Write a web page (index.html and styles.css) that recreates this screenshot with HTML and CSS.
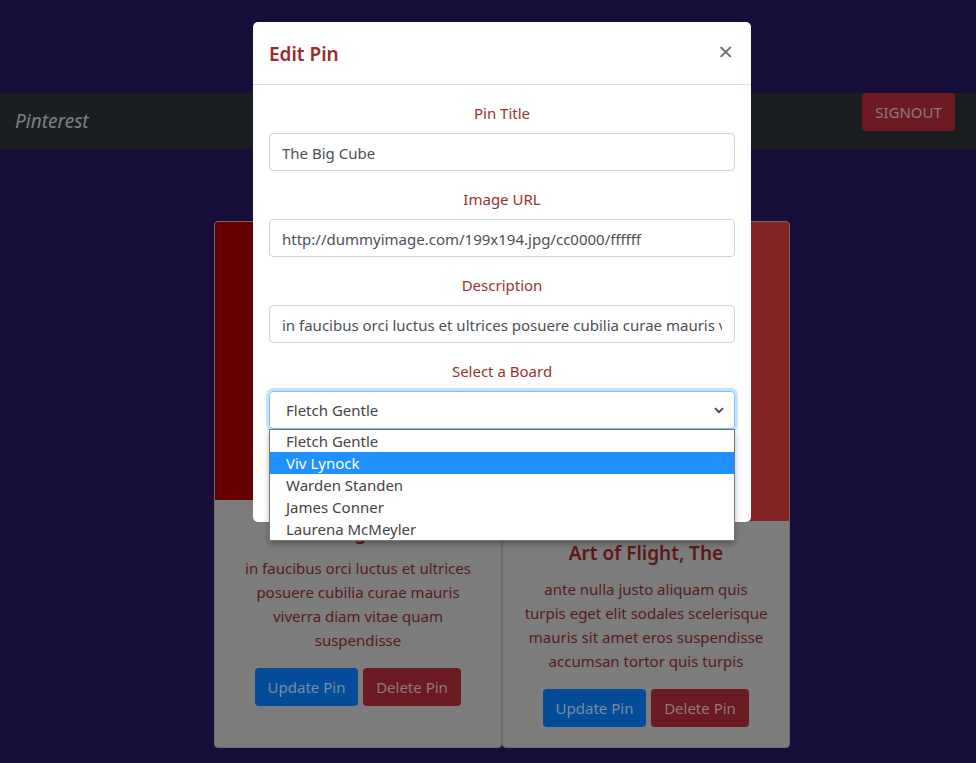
FILE: index.html
```html
<!DOCTYPE html>
<html>
<head>
<meta charset="utf-8">
<link rel="stylesheet" href="styles.css">
</head>
<body>
<div class="page">
  <nav class="navbar">
    <span class="brand">Pinterest</span>
    <button class="btn btn-signout">SIGNOUT</button>
  </nav>
  <div class="cards">
    <div class="card">
      <div class="card-img img-a"></div>
      <div class="card-body">
        <h5 class="card-title">The Big Cube</h5>
        <p class="card-text">in faucibus orci luctus et ultrices posuere cubilia curae mauris viverra diam vitae quam suspendisse</p>
        <div class="actions">
          <button class="btn btn-update">Update Pin</button>
          <button class="btn btn-delete">Delete Pin</button>
        </div>
      </div>
    </div>
    <div class="card">
      <div class="card-img img-b"></div>
      <div class="card-body">
        <h5 class="card-title">Art of Flight, The</h5>
        <p class="card-text">ante nulla justo aliquam quis turpis eget elit sodales scelerisque mauris sit amet eros suspendisse accumsan tortor quis turpis</p>
        <div class="actions">
          <button class="btn btn-update">Update Pin</button>
          <button class="btn btn-delete">Delete Pin</button>
        </div>
      </div>
    </div>
  </div>
</div>

<div class="modal">
  <div class="modal-header">
    <h5 class="modal-title">Edit Pin</h5>
    <span class="close">&times;</span>
  </div>
  <div class="modal-body">
    <div class="form-group">
      <label class="label">Pin Title</label>
      <div class="input"><span class="value">The Big Cube</span></div>
    </div>
    <div class="form-group">
      <label class="label">Image URL</label>
      <div class="input"><span class="value">http://dummyimage.com/199x194.jpg/cc0000/ffffff</span></div>
    </div>
    <div class="form-group">
      <label class="label">Description</label>
      <div class="input"><span class="value">in faucibus orci luctus et ultrices posuere cubilia curae mauris viverra diam vitae quam suspendisse</span></div>
    </div>
    <div class="form-group">
      <label class="label">Select a Board</label>
      <div class="input select">
        <span>Fletch Gentle</span>
        <svg class="chev" width="10" height="7" viewBox="0 0 10 7"><path d="M1 1.2 L5 5.2 L9 1.2" fill="none" stroke="#444" stroke-width="1.8"/></svg>
      </div>
    </div>
    <div class="form-group last">
      <button class="btn btn-submit">Save Changes</button>
    </div>
  </div>
  <ul class="dropdown">
    <li>Fletch Gentle</li>
    <li class="active">Viv Lynock</li>
    <li>Warden Standen</li>
    <li>James Conner</li>
    <li>Laurena McMeyler</li>
  </ul>
</div>
</body>
</html>
```

FILE: styles.css
```css
* { box-sizing: border-box; }
html, body { margin: 0; padding: 0; }
body {
  background: #170d39;
  font-family: "Noto Sans", "Open Sans", sans-serif;
  font-size: 15px;
  line-height: 1.5;
  width: 976px;
  height: 763px;
  overflow: hidden;
}
.page { padding-top: 93px; }
.navbar {
  height: 56px;
  background: #1b1e21;
  display: flex;
  justify-content: space-between;
  align-items: flex-start;
  padding: 0 21px 0 15px;
}
.brand {
  font-style: italic;
  font-size: 19px;
  color: #7f7f80;
  line-height: 56px;
}
.btn {
  font-family: inherit;
  font-size: 15px;
  line-height: 24px;
  border: 1px solid transparent;
  border-radius: 4px;
  padding: 6px 12px;
}
.btn-signout {
  background: #6e1a22;
  color: #8c7b80;
  height: 38px;
  width: 93px;
  padding: 6px 0;
}
.cards {
  display: flex;
  align-items: stretch;
  padding: 72px 0 0 214px;
}
.card {
  width: 288px;
  background: #7c7c7d;
  border: 1px solid #6b6b6b;
  border-radius: 4px;
  display: flex;
  flex-direction: column;
  overflow: hidden;
}
.card-img { width: 100%; flex-shrink: 0; }
.img-a { height: 278px; background: #660000; }
.img-b { height: 299px; background: #822424; }
.card-body {
  padding: 20px 20px;
  text-align: center;
}
.card-title {
  margin: 0 0 12px;
  font-size: 19px;
  font-weight: 600;
  line-height: 24px;
  color: #5e1717;
}
.card-text {
  margin: 0 0 16px;
  color: #581a1a;
  line-height: 24px;
}
.actions {
  display: flex;
  justify-content: center;
  gap: 5px;
}
.btn-update { background: #044b98; color: #7a8ba3; width: 103px; padding: 6px 0; }
.btn-delete { background: #6c1a22; color: #8e7a7e; width: 98px; padding: 6px 0; }

.modal {
  position: absolute;
  left: 253px;
  top: 22px;
  width: 498px;
  background: #fff;
  border-radius: 5px;
}
.modal-header {
  display: flex;
  justify-content: space-between;
  align-items: center;
  padding: 16px;
  border-bottom: 1px solid #dee2e6;
  height: 63px;
}
.modal-title {
  margin: 2px 0 0;
  font-size: 19px;
  font-weight: 600;
  line-height: 30px;
  color: #9b2b2b;
}
.close {
  font-size: 26px;
  font-weight: 400;
  color: #6f6f6f;
  line-height: 1;
  margin-right: 2px;
  margin-top: -4px;
}
.modal-body { padding: 16px; }
.form-group {
  margin-bottom: 16px;
  text-align: center;
}
.label {
  display: block;
  margin-bottom: 8px;
  color: #9b3232;
  line-height: 24px;
}
.input {
  height: 38px;
  border: 1px solid #ced4da;
  border-radius: 4px;
  padding: 7px 12px 5px;
  color: #495057;
  text-align: left;
  white-space: nowrap;
  line-height: 24px;
}
.value {
  display: block;
  overflow: hidden;
  white-space: nowrap;
}
.select {
  display: flex;
  justify-content: space-between;
  align-items: center;
  padding: 6px 10px 6px 16px;
  border-color: #80bdff;
  box-shadow: 0 0 0 3px rgba(0,123,255,.22);
  color: #444;
}
.chev { margin-top: 1px; }
.last { margin-bottom: 23px; }
.btn-submit { background: #007bff; color: #fff; }
.dropdown {
  position: absolute;
  left: 16px;
  top: 407px;
  width: 466px;
  margin: 0;
  padding: 0;
  list-style: none;
  background: #fff;
  border: 1px solid #767676;
  box-shadow: 0 3px 6px rgba(0,0,0,.3);
}
.dropdown li {
  height: 22px;
  line-height: 22px;
  padding-left: 16px;
  color: #444;
}
.dropdown li.active { background: #1e90ff; color: #fff; }
```
